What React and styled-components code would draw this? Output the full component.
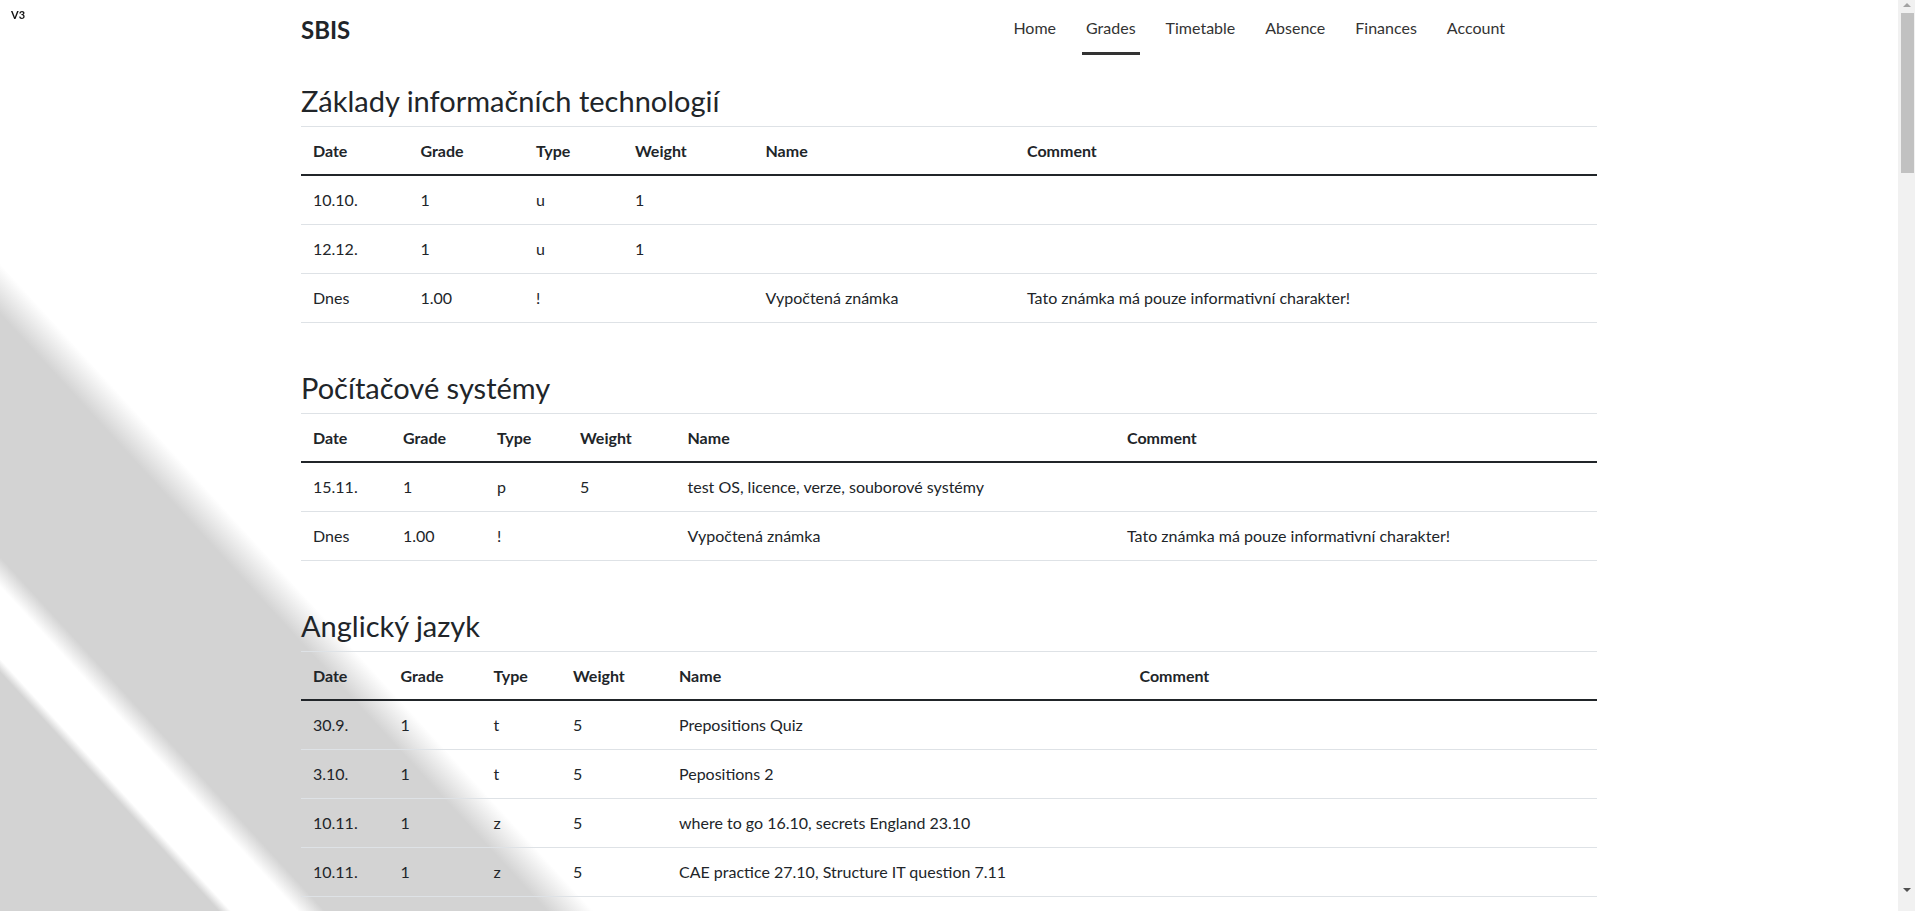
import React from "react";
import styled, { createGlobalStyle } from "styled-components";

const GlobalStyle = createGlobalStyle`
html{
  background-color:#fff;
  background-image:linear-gradient(
    227.5deg,
    #fff 0px,
    #fff 1590px,
    #d3d3d3 1624px,
    #d3d3d3 1788px,
    #fff 1808px,
    #fff 1857px,
    #d3d3d3 1866px,
    #d3d3d3 100%
  );
  background-size:1915px 911px;
  background-repeat:no-repeat;
  background-position:0 0;
}
body{
  margin:0;
  padding-right:17px;
  font-family:Lato, "Liberation Sans", sans-serif;
  color:#212529;
}
`;

const calc = ["Dnes", "1.00", "!", "", "Vypočtená známka", "Tato známka má pouze informativní charakter!"];

const subjects = [
  {
    title: "Základy informačních technologií",
    cols: [107.5, 115.5, 99, 130.5, 261.5, 582],
    rows: [
      ["10.10.", "1", "u", "1", "", ""],
      ["12.12.", "1", "u", "1", "", ""],
      calc,
    ],
  },
  {
    title: "Počítačové systémy",
    cols: [90, 94, 83, 107.5, 439.5, 482],
    rows: [
      ["15.11.", "1", "p", "5", "test OS, licence, verze, souborové systémy", ""],
      calc,
    ],
  },
  {
    title: "Anglický jazyk",
    cols: [87.5, 93, 79.5, 106, 460.5, 469.5],
    rows: [
      ["30.9.", "1", "t", "5", "Prepositions Quiz", ""],
      ["3.10.", "1", "t", "5", "Pepositions 2", ""],
      ["10.11.", "1", "z", "5", "where to go 16.10, secrets England 23.10", ""],
      ["10.11.", "1", "z", "5", "CAE practice 27.10, Structure IT question 7.11", ""],
      ["24.11.", "1", "t", "5", "Vocabulary test", ""],
      calc,
    ],
  },
  {
    title: "Matematika",
    rows: [
      ["4.10.", "2", "p", "5", "Lineární rovnice", ""],
      ["8.11.", "1", "u", "2", "Kvadratické rovnice", ""],
      ["6.12.", "2", "p", "5", "Funkce a jejich grafy", ""],
      ["Dnes", "1.71", "!", "", "Vypočtená známka", "Tato známka má pouze informativní charakter!"],
    ],
  },
  {
    title: "Český jazyk a literatura",
    rows: [
      ["2.10.", "1", "d", "3", "Diktát", ""],
      ["20.10.", "2", "p", "5", "Literatura starověku", ""],
      ["17.11.", "1", "s", "4", "Slohová práce", ""],
      ["Dnes", "1.42", "!", "", "Vypočtená známka", "Tato známka má pouze informativní charakter!"],
    ],
  },
  {
    title: "Programování",
    rows: [
      ["12.10.", "1", "p", "5", "Podmínky a cykly", ""],
      ["9.11.", "1", "u", "3", "Funkce", ""],
      calc,
    ],
  },
  {
    title: "Fyzika",
    rows: [
      ["18.10.", "2", "p", "5", "Kinematika", ""],
      ["29.11.", "1", "u", "2", "Dynamika", ""],
      ["Dnes", "1.71", "!", "", "Vypočtená známka", "Tato známka má pouze informativní charakter!"],
    ],
  },
  {
    title: "Tělesná výchova",
    rows: [["26.9.", "1", "z", "1", "Atletika", ""], calc],
  },
];

const links = ["Home", "Grades", "Timetable", "Absence", "Finances", "Account"];
const columns = ["Date", "Grade", "Type", "Weight", "Name", "Comment"];

export default function App() {
  return (
    <>
      <GlobalStyle />
      <Version>V3</Version>
      <Container>
        <Header>
          <Brand href="#">SBIS</Brand>
          <Nav>
            {links.map((l) => (
              <NavLink key={l} href="#" $active={l === "Grades"}>
                {l}
              </NavLink>
            ))}
          </Nav>
        </Header>
        <Main>
          {subjects.map((s) => (
            <section key={s.title}>
              <SubjectTitle>{s.title}</SubjectTitle>
              <GradeTable>
                {s.cols && (
                  <colgroup>
                    {s.cols.map((w, i) => (
                      <col key={i} style={{ width: w }} />
                    ))}
                  </colgroup>
                )}
                <thead>
                  <tr>
                    {columns.map((c) => (
                      <Th key={c}>{c}</Th>
                    ))}
                  </tr>
                </thead>
                <tbody>
                  {s.rows.map((r, i) => (
                    <tr key={i}>
                      {r.map((v, j) => (
                        <Td key={j}>{v}</Td>
                      ))}
                    </tr>
                  ))}
                </tbody>
              </GradeTable>
            </section>
          ))}
        </Main>
      </Container>
      <ScrollTrack>
        <ArrowUp />
        <Thumb />
        <ArrowDown />
      </ScrollTrack>
    </>
  );
}

const Version = styled.div`
  position: fixed;
  top: 8px;
  left: 11px;
  font-size: 11px;
  font-weight: 700;
  color: #111;
`;

const Container = styled.div`
  max-width: 1320px;
  margin: 0 auto;
  padding: 0 12px;
  box-sizing: border-box;
`;

const Header = styled.header`
  display: flex;
  align-items: flex-start;
  height: 60px;
`;

const Brand = styled.a`
  align-self: center;
  font-size: 24px;
  font-weight: 700;
  line-height: 30px;
  color: #212529;
  text-decoration: none;
`;

const Nav = styled.nav`
  display: flex;
  gap: 22px;
  margin-left: auto;
  margin-right: 88px;
`;

const NavLink = styled.a`
  display: flex;
  align-items: center;
  height: 50px;
  padding: 2px 4px 0;
  font-size: 16px;
  color: #333;
  text-decoration: none;
  border-bottom: 3px solid ${(p) => (p.$active ? "#333" : "transparent")};
`;

const Main = styled.main`
  padding-top: 24px;
`;

const SubjectTitle = styled.h3`
  margin: 0 0 8px;
  font-size: 29px;
  font-weight: 400;
  line-height: 34px;
  color: #212529;
`;

const GradeTable = styled.table`
  width: 100%;
  border-collapse: separate;
  border-spacing: 0;
  margin-bottom: 48px;
  font-size: 16px;
  line-height: 24px;
`;

const Th = styled.th`
  text-align: left;
  font-weight: 700;
  padding: 12px 12px 11px;
  border-top: 1px solid #dee2e6;
  border-bottom: 2px solid #212529;
`;

const Td = styled.td`
  padding: 12px;
  border-bottom: 1px solid #dee2e6;
  color: #212529;
`;

/* drawn window scrollbar on the right edge */
const ScrollTrack = styled.div`
  position: fixed;
  top: 0;
  right: 0;
  width: 17px;
  height: 100vh;
  background: #f1f1f1;
  display: flex;
  flex-direction: column;
  align-items: center;
`;

const ArrowUp = styled.div`
  margin-top: 3px;
  width: 0;
  height: 0;
  border-left: 4px solid transparent;
  border-right: 4px solid transparent;
  border-bottom: 4px solid #a3a3a3;
`;

const Thumb = styled.div`
  align-self: flex-end;
  margin: 6px 1px 0 0;
  width: 13px;
  height: 160px;
  background: #c1c1c1;
`;

const ArrowDown = styled.div`
  margin-top: auto;
  margin-bottom: 19px;
  width: 0;
  height: 0;
  border-left: 4px solid transparent;
  border-right: 4px solid transparent;
  border-top: 4px solid #505050;
`;
